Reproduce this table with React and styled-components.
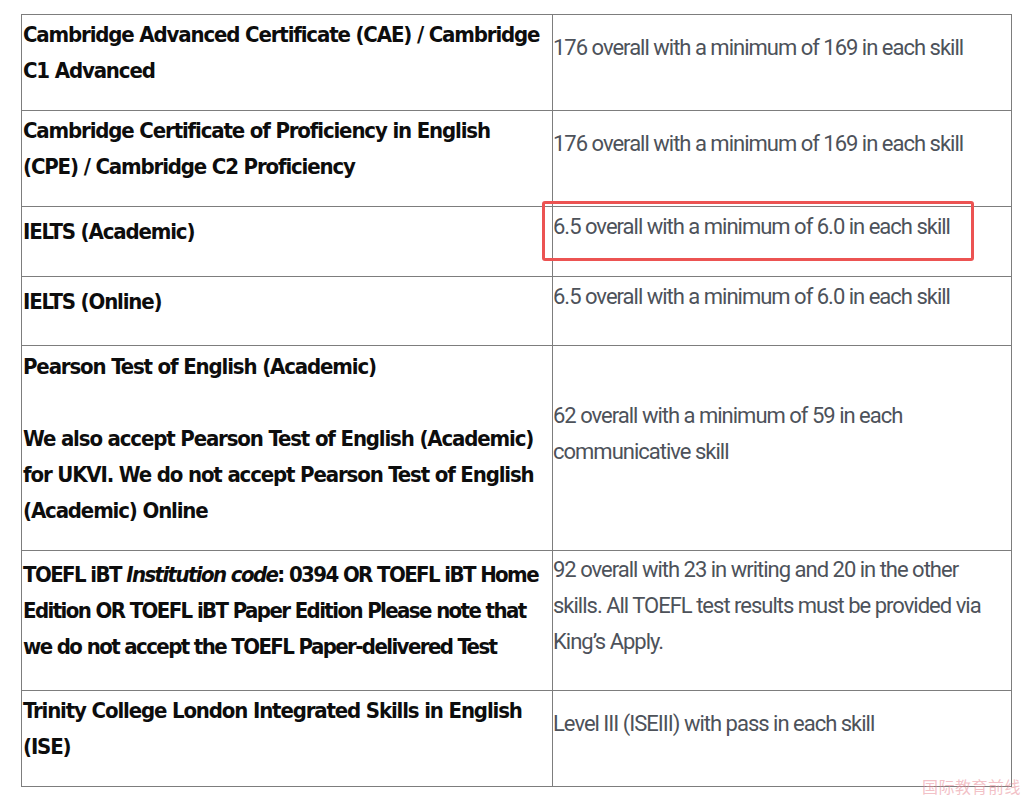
import styled, { createGlobalStyle } from "styled-components";

const GlobalStyle = createGlobalStyle`
  html, body {
    margin: 0;
    padding: 0;
    background: #fff;
  }
`;

const Page = styled.div`
  position: relative;
  width: 1025px;
  height: 799px;
  padding: 14px 0 0 21px;
  box-sizing: border-box;
  overflow: hidden;
`;

const Table = styled.table`
  width: 991px;
  border-collapse: collapse;
  table-layout: fixed;
`;

const Row = styled.tr`
  height: ${(p) => p.$h}px;
`;

const Cell = styled.td`
  border: 1px solid #7d7d7d;
  padding: 0;
  vertical-align: middle;

  p {
    margin: 0 0 23px;
    line-height: 36px;
  }
`;

const Exam = styled(Cell)`
  width: 523px;
  font-family: "DejaVu Sans Condensed", "DejaVu Sans", sans-serif;
  font-stretch: condensed;
  font-weight: 700;
  font-size: 22px;
  letter-spacing: ${(p) => (p.$tight ? "-1.6px" : "-1.15px")};
  white-space: ${(p) => (p.$tight ? "nowrap" : "normal")};
  color: #0d0d0d;
  padding: 2px 6px 0 1px;

  p {
    margin-bottom: 21px;
  }

  em {
    font-style: italic;
  }
`;

const Score = styled(Cell)`
  font-family: Roboto, "Liberation Sans", sans-serif;
  font-weight: 400;
  font-size: 22px;
  letter-spacing: -1px;
  color: #4d525a;
  padding-bottom: 6px;
`;

const Highlight = styled.div`
  position: absolute;
  left: 542px;
  top: 201px;
  width: 426px;
  height: 54px;
  border: 3px solid #ec5352;
  border-radius: 3px;
  pointer-events: none;
`;

const Watermark = styled.div`
  position: absolute;
  right: 4px;
  bottom: 1px;
  font-family: "Noto Sans CJK SC", sans-serif;
  font-size: 16px;
  color: rgba(232, 140, 150, 0.55);
  letter-spacing: 0.5px;
`;

const rows = [
  {
    h: 96,
    exam: <p>Cambridge Advanced Certificate (CAE) / Cambridge C1 Advanced</p>,
    score: <p>176 overall with a minimum of 169 in each skill</p>,
  },
  {
    h: 96,
    exam: <p>Cambridge Certificate of Proficiency in English (CPE) / Cambridge C2 Proficiency</p>,
    score: <p>176 overall with a minimum of 169 in each skill</p>,
  },
  {
    h: 70,
    exam: <p>IELTS (Academic)</p>,
    score: <p>6.5 overall with a minimum of 6.0 in each skill</p>,
  },
  {
    h: 69,
    exam: <p>IELTS (Online)</p>,
    score: <p>6.5 overall with a minimum of 6.0 in each skill</p>,
  },
  {
    h: 205,
    exam: (
      <p>
        Pearson Test of English (Academic)
        <br />
        <br />
        We also accept Pearson Test of English (Academic) for UKVI. We do not accept Pearson Test of
        English (Academic) Online
      </p>
    ),
    score: <p>62 overall with a minimum of 59 in each communicative skill</p>,
  },
  {
    h: 140,
    tight: true,
    exam: (
      <p>
        TOEFL iBT <em>Institution code</em>: 0394 OR TOEFL iBT Home
        <br />
        Edition OR TOEFL iBT Paper Edition Please note that
        <br />
        we do not accept the TOEFL Paper-delivered Test
      </p>
    ),
    score: (
      <p>
        92 overall with 23 in writing and 20 in the other skills. All TOEFL test results must be
        provided via King’s Apply.
      </p>
    ),
  },
  {
    h: 96,
    exam: <p>Trinity College London Integrated Skills in English (ISE)</p>,
    score: <p>Level III (ISEIII) with pass in each skill</p>,
  },
];

export default function App() {
  return (
    <>
      <GlobalStyle />
      <Page>
        <Table>
          <tbody>
            {rows.map((r, i) => (
              <Row key={i} $h={r.h}>
                <Exam $tight={r.tight}>{r.exam}</Exam>
                <Score>{r.score}</Score>
              </Row>
            ))}
          </tbody>
        </Table>
        <Highlight />
        <Watermark>国际教育前线</Watermark>
      </Page>
    </>
  );
}
